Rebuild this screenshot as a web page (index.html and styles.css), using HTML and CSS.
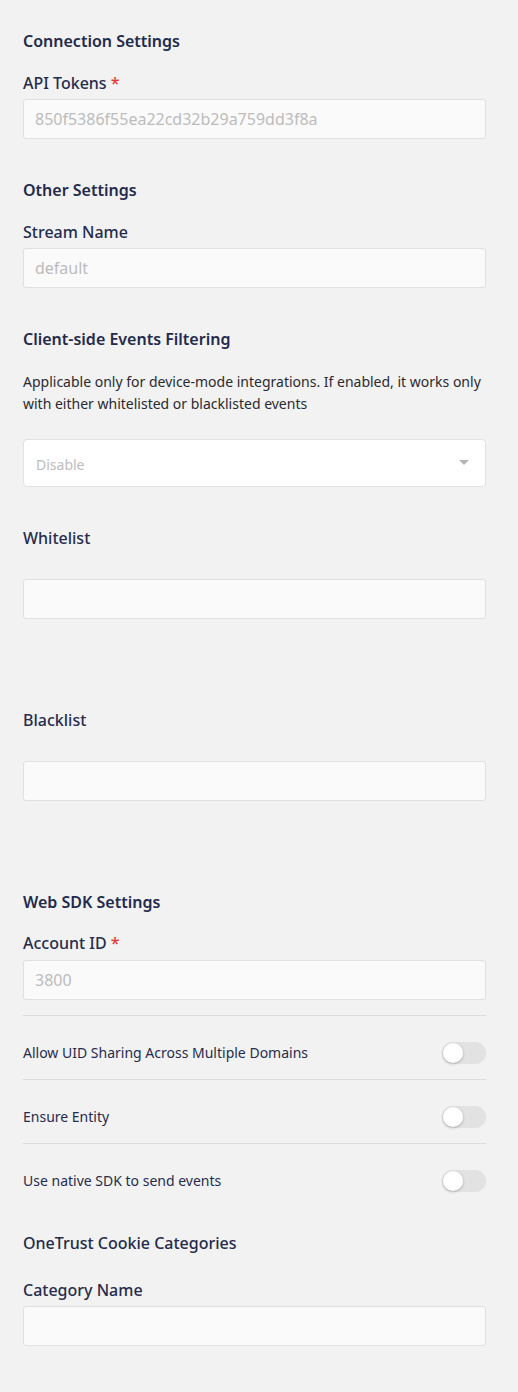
FILE: index.html
```html
<!DOCTYPE html>
<html>
<head>
<meta charset="utf-8">
<link rel="stylesheet" href="styles.css">
</head>
<body>
<div class="page">
  <h2 class="section first">Connection Settings</h2>
  <label class="label">API Tokens <span class="req">*</span></label>
  <div class="input"><span class="ph">850f5386f55ea22cd32b29a759dd3f8a</span></div>

  <h2 class="section">Other Settings</h2>
  <label class="label">Stream Name</label>
  <div class="input"><span class="ph">default</span></div>

  <h2 class="section">Client-side Events Filtering</h2>
  <p class="desc">Applicable only for device-mode integrations. If enabled, it works only with either whitelisted or blacklisted events</p>
  <div class="select"><span class="ph small">Disable</span><span class="caret"></span></div>

  <label class="label list-label">Whitelist</label>
  <div class="input list-input"></div>

  <label class="label list-label far">Blacklist</label>
  <div class="input list-input"></div>

  <h2 class="section far">Web SDK Settings</h2>
  <label class="label sdk-label">Account ID <span class="req">*</span></label>
  <div class="input sdk-input"><span class="ph">3800</span></div>

  <div class="toggles">
    <div class="toggle-row"><span>Allow UID Sharing Across Multiple Domains</span><span class="switch"><span class="knob"></span></span></div>
    <div class="toggle-row"><span>Ensure Entity</span><span class="switch"><span class="knob"></span></span></div>
    <div class="toggle-row"><span>Use native SDK to send events</span><span class="switch"><span class="knob"></span></span></div>
  </div>

  <h2 class="section light">OneTrust Cookie Categories</h2>
  <label class="label cat-label">Category Name</label>
  <div class="input"></div>
</div>
</body>
</html>
```

FILE: styles.css
```css
* { box-sizing: border-box; }
html, body { margin: 0; padding: 0; }
body {
  background: #f2f2f2;
  font-family: "Noto Sans", "Open Sans", sans-serif;
  color: #262c4d;
}
.page {
  width: 518px;
  padding: 30px 32px 46px 23px;
  display: flex;
  flex-direction: column;
}
.section {
  margin: 40px 0 0 0;
  font-size: 16px;
  line-height: 22px;
  font-weight: 600;
  color: #232a4c;
}
.section.first { margin-top: 0; }
.section.far { margin-top: 90px; }
.section.light { font-weight: 500; }
.label {
  display: block;
  margin-top: 20px;
  font-size: 16px;
  line-height: 22px;
  font-weight: 500;
  color: #262c4d;
}
.req { color: #e53a2f; }
.input {
  margin-top: 5px;
  height: 40px;
  background: #fafafa;
  border: 1px solid #e0e0e0;
  border-radius: 3px;
  display: flex;
  align-items: center;
  padding: 0 11px;
}
.ph {
  font-size: 16px;
  color: #bcbcbc;
}
.ph.small { font-size: 14px; margin-top: 2px; }
.desc {
  margin: 21px 0 0 0;
  font-size: 14px;
  line-height: 22px;
  color: #2a2a30;
}
.select {
  margin-top: 24px;
  height: 48px;
  background: #ffffff;
  border: 1px solid #e2e2e2;
  border-radius: 4px;
  display: flex;
  align-items: center;
  justify-content: space-between;
  padding: 0 16px 0 12px;
}
.caret {
  width: 0; height: 0;
  border-left: 5px solid transparent;
  border-right: 5px solid transparent;
  border-top: 5px solid #b5b5b5;
  margin-top: -2px;
}
.list-label { margin-top: 40px; }
.list-label.far { margin-top: 90px; }
.list-input { margin-top: 30px; }
.sdk-label { margin-top: 19px; }
.sdk-input { margin-top: 6px; }
.toggles {
  margin-top: 15px;
  border-top: 1px solid #dddddd;
}
.toggle-row {
  display: flex;
  align-items: center;
  justify-content: space-between;
  padding: 26px 0 15px;
  border-bottom: 1px solid #dddddd;
  font-size: 14px;
  line-height: 22px;
  color: #262c4d;
}
.toggle-row:last-child { border-bottom: none; padding-bottom: 0; }
.switch {
  width: 44px;
  height: 22px;
  border-radius: 11px;
  background: #e2e2e2;
  display: flex;
  align-items: center;
  padding: 0 1px;
}
.knob {
  width: 20px;
  height: 20px;
  border-radius: 50%;
  background: #ffffff;
  box-shadow: 0 1px 3px rgba(0,0,0,0.25);
}
.cat-label { margin-top: 25px; }
```
